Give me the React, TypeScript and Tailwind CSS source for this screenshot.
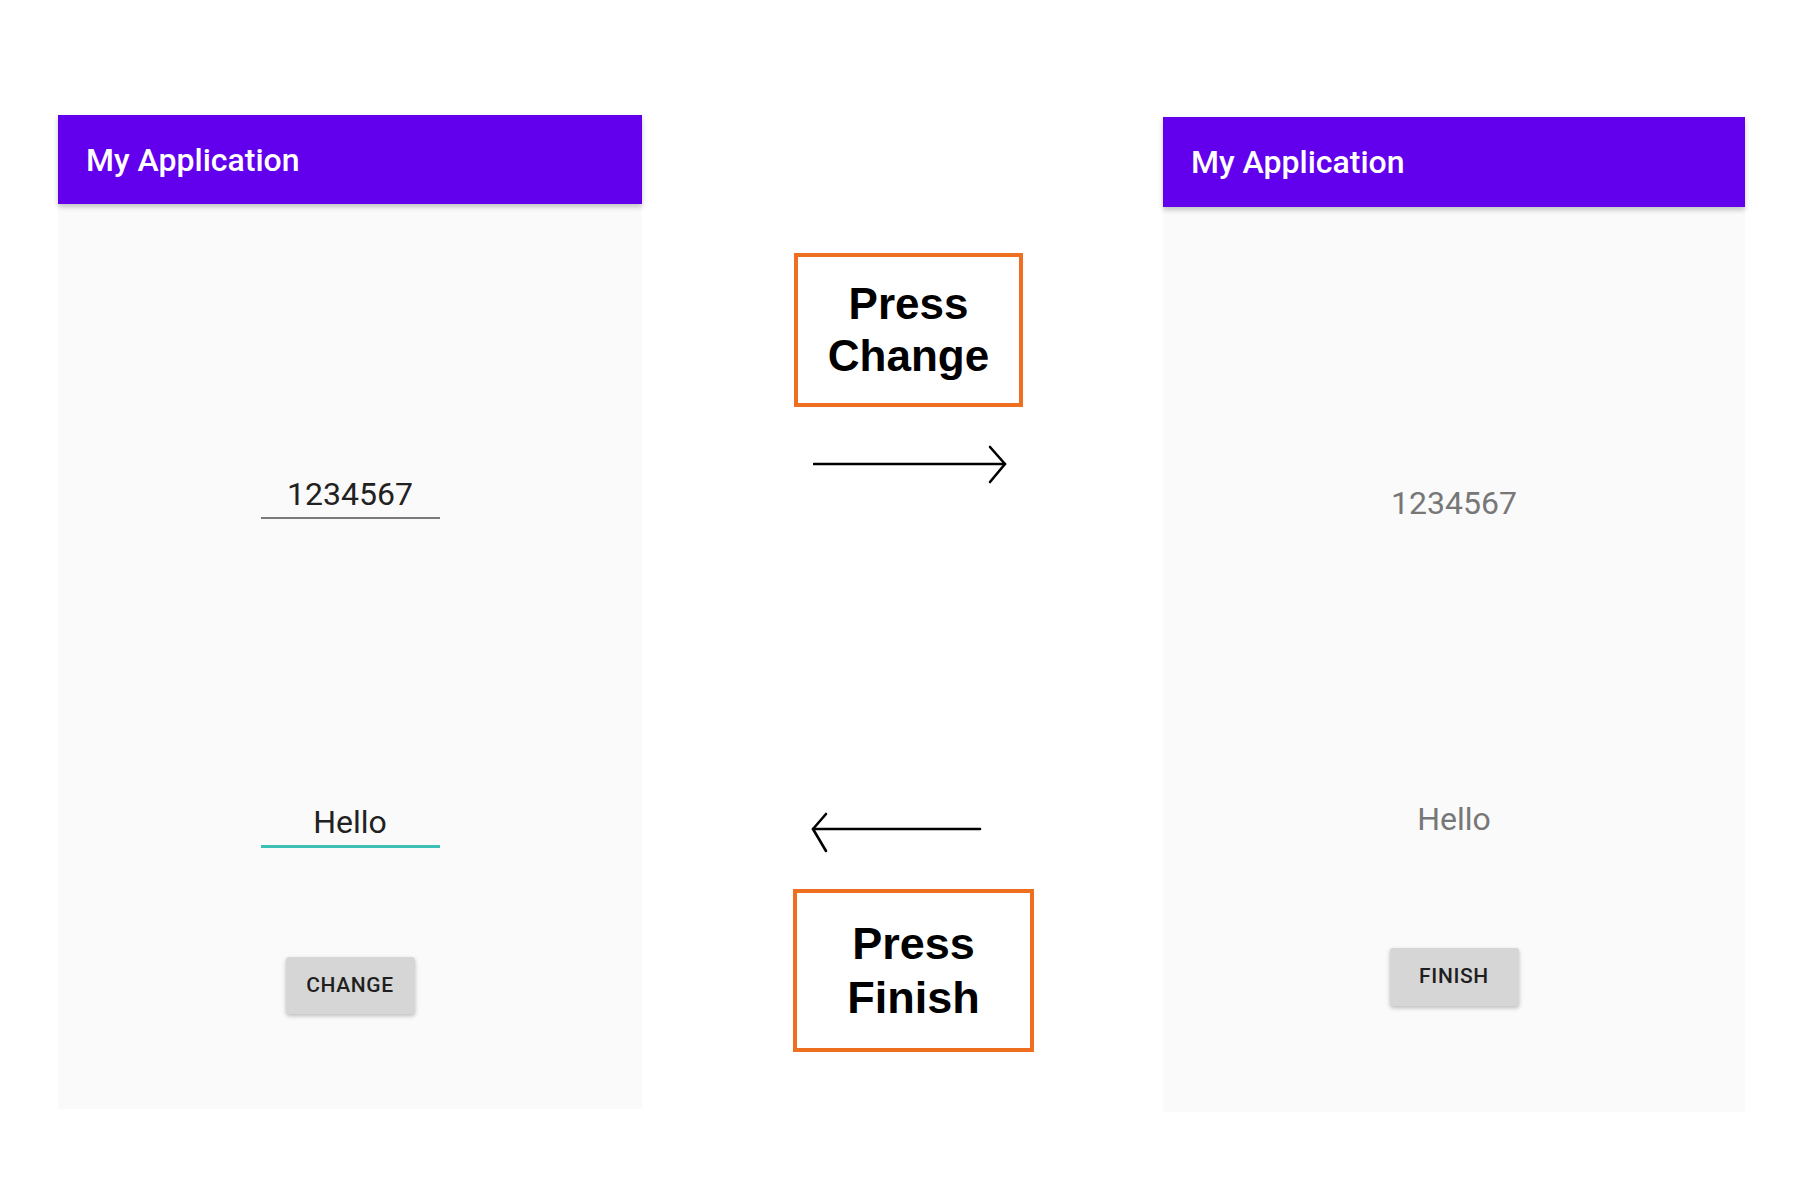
import React from 'react';

const ROBOTO = "font-['Roboto','Liberation_Sans',sans-serif]";

function Phone({ top, headerH, children }: { top: string; headerH: string; children: React.ReactNode }) {
  return (
    <div className={`${top} flex flex-col bg-[#fafafa] ${ROBOTO}`}>
      <div className={`${headerH} relative z-10 flex items-center bg-[#6200ee] pl-[28px] shadow-[0_3px_5px_rgba(0,0,0,0.22)]`}>
        <span className="text-[32px] font-medium text-white">My Application</span>
      </div>
      <div className="flex flex-1 flex-col items-center">{children}</div>
    </div>
  );
}

function Field({ value, line, className = '' }: { value: string; line: string; className?: string }) {
  return (
    <div className={`w-[179px] pb-[4px] text-center text-[32px] leading-[38px] text-[#212121] ${line} ${className}`}>
      {value}
    </div>
  );
}

function RaisedButton({ label, className = '' }: { label: string; className?: string }) {
  return (
    <button className={`flex h-[57px] w-[129px] items-center justify-center rounded-[3px] bg-[#d6d6d6] text-[21px] font-medium tracking-[0.03em] text-[#1f1f1f] shadow-[0_2px_4px_rgba(0,0,0,0.25)] ${className}`}>
      {label}
    </button>
  );
}

function Note({ lines, className = '' }: { lines: string[]; className?: string }) {
  return (
    <div className={`flex flex-col items-center justify-center border-[4px] border-[#ee6f1f] font-['Liberation_Sans',Arial,sans-serif] font-bold text-black ${className}`}>
      {lines.map(l => <span key={l}>{l}</span>)}
    </div>
  );
}

export default function App() {
  return (
    <div className="flex h-[1195px] w-full items-start bg-white">
      {/* left screen */}
      <div className="ml-[58px] w-[584px]">
        <Phone top="mt-[115px] h-[994px]" headerH="h-[89px]">
          <Field value="1234567" line="border-b-2 border-[#7a7a7a]" className="mt-[271px]" />
          <Field value="Hello" line="border-b-[3px] border-[#3cbfb4]" className="mt-[284px]" />
          <RaisedButton label="CHANGE" className="mt-[109px]" />
        </Phone>
      </div>

      {/* middle hints */}
      <div className="flex w-[521px] flex-col">
        <Note lines={['Press', 'Change']} className="ml-[152px] mt-[253px] h-[154px] w-[229px] text-[44px] leading-[52px]" />
        <svg className="ml-[171px] mt-[38px]" width="196" height="40" viewBox="0 0 196 40" fill="none" stroke="#000" strokeWidth="2.6" strokeLinecap="round" strokeLinejoin="round">
          <path d="M1 19H192" />
          <path d="M177 2L192 19L177 37" />
        </svg>
        <svg className="ml-[168px] mt-[327px]" width="172" height="42" viewBox="0 0 172 42" fill="none" stroke="#000" strokeWidth="2.6" strokeLinecap="round" strokeLinejoin="round">
          <path d="M3 17H170" />
          <path d="M16 2L3 17L16 39" />
        </svg>
        <Note lines={['Press', 'Finish']} className="ml-[151px] mt-[35px] h-[163px] w-[241px] text-[45px] leading-[54px]" />
      </div>

      {/* right screen */}
      <div className="w-[582px]">
        <Phone top="mt-[117px] h-[995px]" headerH="h-[90px]">
          <div className="mt-[277px] text-[32px] leading-[38px] text-[#777777]">1234567</div>
          <div className="mt-[278px] text-[32px] leading-[38px] text-[#777777]">Hello</div>
          <RaisedButton label="FINISH" className="mt-[110px] h-[58px] w-[128px]" />
        </Phone>
      </div>
    </div>
  );
}
